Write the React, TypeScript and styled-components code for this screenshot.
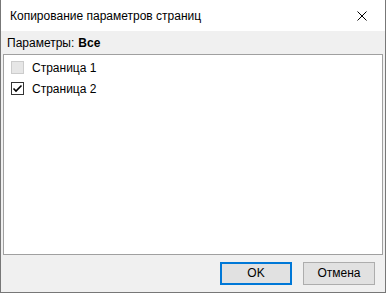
import styled, { createGlobalStyle } from "styled-components";

const Global = createGlobalStyle`
  html, body {
    margin: 0;
    padding: 0;
    background: #ffffff;
  }
  * {
    box-sizing: border-box;
  }
`;

const Window = styled.div`
  width: 386px;
  height: 293px;
  display: flex;
  flex-direction: column;
  border: 1px solid #777777;
  border-top: none;
  font-family: "Segoe UI", "Liberation Sans", "Noto Sans", sans-serif;
  font-size: 12px;
  color: #000000;
`;

const TitleBar = styled.div`
  height: 31px;
  flex-shrink: 0;
  display: flex;
  align-items: center;
  justify-content: space-between;
  background: #ffffff;
  padding-left: 9px;
`;

const Title = styled.span`
  font-size: 12px;
`;

const CloseButton = styled.div`
  width: 46px;
  height: 31px;
  display: flex;
  align-items: center;
  justify-content: center;
`;

const Body = styled.div`
  flex: 1;
  display: flex;
  flex-direction: column;
  background: #f0f0f0;
  padding: 0 2px;
`;

const Caption = styled.div`
  height: 23px;
  display: flex;
  align-items: center;
  padding-left: 4px;
  padding-top: 1px;
`;

const Bold = styled.b`
  font-weight: 700;
  margin-left: 4px;
`;

const ListBox = styled.div`
  flex: 1;
  background: #ffffff;
  border: 1px solid #a0a0a0;
  padding: 2px 0 0 7px;
  display: flex;
  flex-direction: column;
`;

const Item = styled.div`
  height: 21px;
  display: flex;
  align-items: center;
  gap: 8px;
`;

const Box = styled.div<{ $disabled?: boolean }>`
  width: 13px;
  height: 13px;
  border: 1px solid ${(p) => (p.$disabled ? "#cccccc" : "#333333")};
  background: ${(p) => (p.$disabled ? "#e6e6e6" : "#ffffff")};
  display: flex;
  align-items: center;
  justify-content: center;
`;

const Footer = styled.div`
  height: 37px;
  display: flex;
  align-items: center;
  justify-content: flex-end;
  gap: 11px;
  padding-right: 8px;
  padding-bottom: 1px;
`;

const Button = styled.div<{ $focused?: boolean }>`
  width: 72px;
  height: 23px;
  display: flex;
  align-items: center;
  justify-content: center;
  background: #e1e1e1;
  border: 1px solid ${(p) => (p.$focused ? "#0078d7" : "#adadad")};
  ${(p) => (p.$focused ? "box-shadow: inset 0 0 0 1px #0078d7;" : "")}
`;

export default function App() {
  return (
    <>
      <Global />
      <Window>
        <TitleBar>
          <Title>Копирование параметров страниц</Title>
          <CloseButton>
            <svg width="10" height="10" viewBox="0 0 10 10">
              <path d="M0.5 0.5 L9.5 9.5 M9.5 0.5 L0.5 9.5" stroke="#000" strokeWidth="1" />
            </svg>
          </CloseButton>
        </TitleBar>
        <Body>
          <Caption>
            Параметры:<Bold>Все</Bold>
          </Caption>
          <ListBox>
            <Item>
              <Box $disabled />
              <span>Страница 1</span>
            </Item>
            <Item>
              <Box>
                <svg width="11" height="11" viewBox="0 0 11 11">
                  <path d="M1.5 5.5 L4 8 L9.5 2.5" stroke="#000" strokeWidth="1.6" fill="none" />
                </svg>
              </Box>
              <span>Страница 2</span>
            </Item>
          </ListBox>
          <Footer>
            <Button $focused>OK</Button>
            <Button>Отмена</Button>
          </Footer>
        </Body>
      </Window>
    </>
  );
}
